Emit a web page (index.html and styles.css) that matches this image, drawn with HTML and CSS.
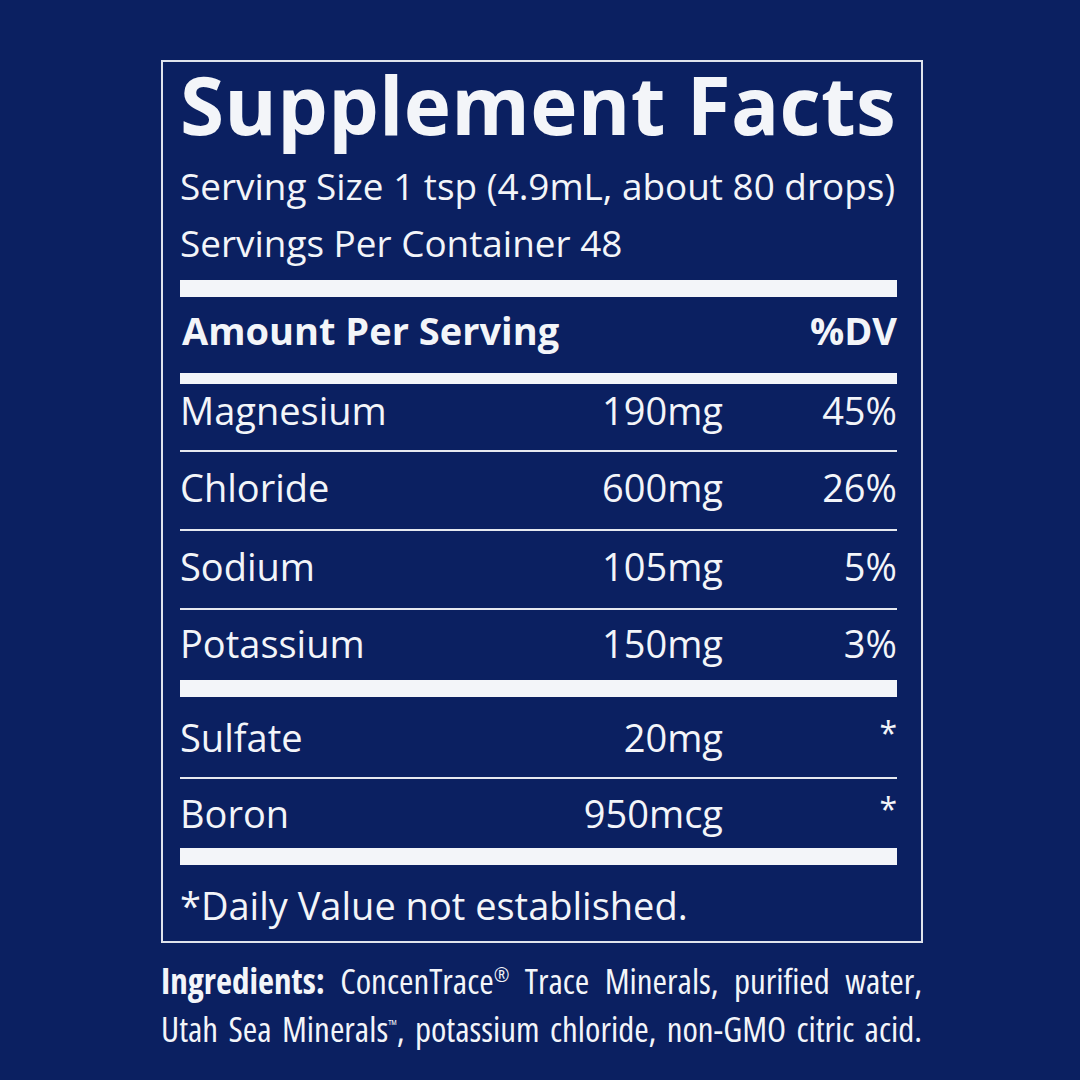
FILE: index.html
```html
<!DOCTYPE html>
<html lang="en">
<head>
<meta charset="utf-8">
<title>Supplement Facts</title>
<link rel="stylesheet" href="styles.css">
</head>
<body>
<main class="page">
  <section class="label">
    <h1 class="title">Supplement Facts</h1>
    <p class="serving">Serving Size 1 tsp (4.9mL, about 80 drops)</p>
    <p class="serving">Servings Per Container 48</p>
    <div class="bar"></div>
    <div class="row head">
      <span class="name">Amount Per Serving</span>
      <span class="amt"></span>
      <span class="dv">%DV</span>
    </div>
    <div class="bar thin-bar"></div>
    <div class="row r1 ruled"><span class="name">Magnesium</span><span class="amt">190mg</span><span class="dv">45%</span></div>
    <div class="row r2 ruled"><span class="name">Chloride</span><span class="amt">600mg</span><span class="dv">26%</span></div>
    <div class="row r2 ruled"><span class="name">Sodium</span><span class="amt">105mg</span><span class="dv">5%</span></div>
    <div class="row r4"><span class="name">Potassium</span><span class="amt">150mg</span><span class="dv">3%</span></div>
    <div class="bar"></div>
    <div class="row r5 ruled"><span class="name">Sulfate</span><span class="amt">20mg</span><span class="dv"><span class="star">*</span></span></div>
    <div class="row r6"><span class="name">Boron</span><span class="amt">950mcg</span><span class="dv"><span class="star">*</span></span></div>
    <div class="bar"></div>
    <p class="note">*Daily Value not established.</p>
  </section>
  <p class="ingredients">
    <span class="ing-line"><b>Ingredients:</b> ConcenTrace<sup>®</sup> Trace Minerals, purified water,</span>
    <span class="ing-line">Utah Sea Minerals<sup class="tm">™</sup>, potassium chloride, non-GMO citric acid.</span>
  </p>
</main>
</body>
</html>
```

FILE: styles.css
```css
html, body {
  margin: 0;
  padding: 0;
}
body {
  width: 1080px;
  height: 1080px;
  background: #0b2061;
  color: #f3f5f9;
  font-family: "Open Sans", "Noto Sans", sans-serif;
  overflow: hidden;
}
.page {
  padding: 60px 0 0 161px;
}
.label {
  border: 2px solid #dfe3ec;
  padding: 0 24px 0 17px;
  width: 717px;
}
.title {
  margin: 2px 0 0;
  font-size: 80px;
  line-height: 80px;
  font-weight: 700;
  letter-spacing: 0.3px;
}
.serving {
  margin: 0;
  font-size: 36.9px;
  line-height: 57px;
  white-space: nowrap;
}
.title + .serving {
  margin-top: 14px;
}
.bar {
  height: 17px;
  background: #f3f5f9;
}
.serving + .bar {
  margin-top: 8px;
}
.thin-bar {
  height: 11px;
}
.row {
  display: grid;
  grid-template-columns: 1fr 160px 174px;
  font-size: 38px;
  line-height: 40px;
}
.row .amt, .row .dv {
  text-align: right;
}
.ruled {
  border-bottom: 2px solid #e6e9f0;
}
.head {
  font-size: 38px;
  font-weight: 700;
  padding: 13px 0 23px;
}
.head .name {
  padding-left: 2px;
}
.r1 { padding: 6px 0 20px; }
.r2 { padding: 15px 0 22px; }
.r4 { padding: 13px 0 17px; }
.r5 { padding: 20px 0 20px; }
.r6 { padding: 14px 0 15px; }
.star {
  font-size: 32px;
  line-height: 0;
  vertical-align: 7px;
}
.note {
  margin: 0;
  font-size: 38px;
  line-height: 40px;
  padding: 20px 0 16px;
}
.ingredients {
  margin: 14px 0 0;
  width: 761px;
  font-size: 35px;
  line-height: 48px;
  font-stretch: 75%;
  font-weight: 500;
}
.ing-line {
  display: block;
  white-space: nowrap;
  text-align: justify;
  text-align-last: justify;
}
.ingredients b {
  font-weight: 700;
}
.ingredients sup {
  font-size: 19px;
  line-height: 0;
  vertical-align: 12px;
}
.ingredients sup.tm {
  font-size: 14px;
}
```
